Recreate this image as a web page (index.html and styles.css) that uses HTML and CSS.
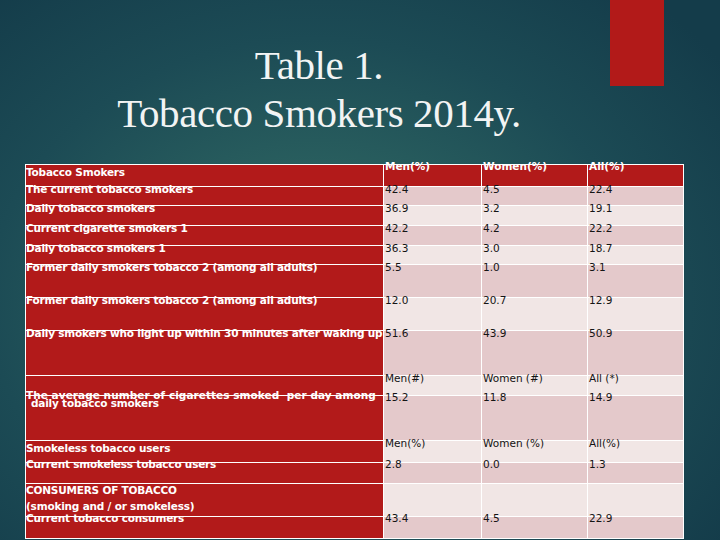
FILE: index.html
```html
<!DOCTYPE html>
<html>
<head>
<meta charset="utf-8">
<link rel="stylesheet" href="styles.css">
</head>
<body>
<div class="slide">
  <div class="accent"></div>
  <h1 class="title">Table 1.<br>Tobacco Smokers 2014y.</h1>
  <div class="grid">
    <div class="c lab t14 thick">Tobacco Smokers</div>
    <div class="c hv t2">Men(%)</div>
    <div class="c hv t2">Women(%)</div>
    <div class="c hv t2">All(%)</div>

    <div class="c lab">The current tobacco smokers</div>
    <div class="c v p">42.4</div><div class="c v p">4.5</div><div class="c v p">22.4</div>

    <div class="c lab">Daily tobacco smokers</div>
    <div class="c v l">36.9</div><div class="c v l">3.2</div><div class="c v l">19.1</div>

    <div class="c lab">Current cigarette smokers 1</div>
    <div class="c v p">42.2</div><div class="c v p">4.2</div><div class="c v p">22.2</div>

    <div class="c lab">Daily tobacco smokers 1</div>
    <div class="c v l">36.3</div><div class="c v l">3.0</div><div class="c v l">18.7</div>

    <div class="c lab">Former daily smokers tobacco 2 (among all adults)</div>
    <div class="c v p">5.5</div><div class="c v p">1.0</div><div class="c v p">3.1</div>

    <div class="c lab">Former daily smokers tobacco 2 (among all adults)</div>
    <div class="c v l">12.0</div><div class="c v l">20.7</div><div class="c v l">12.9</div>

    <div class="c lab">Daily smokers who light up within 30 minutes after waking up</div>
    <div class="c v p">51.6</div><div class="c v p">43.9</div><div class="c v p">50.9</div>

    <div class="c lab"></div>
    <div class="c v l">Men(#)</div><div class="c v l">Women (#)</div><div class="c v l">All (*)</div>

    <div class="c lab"><div class="avg"><div class="wide">The average number of cigarettes smoked&nbsp; per day among</div><div class="ind">daily tobacco smokers</div></div></div>
    <div class="c v p t2">15.2</div><div class="c v p t2">11.8</div><div class="c v p t2">14.9</div>

    <div class="c lab t14">Smokeless tobacco users</div>
    <div class="c v l">Men(%)</div><div class="c v l">Women (%)</div><div class="c v l">All(%)</div>

    <div class="c lab t2">Current smokeless tobacco users</div>
    <div class="c v p t2">2.8</div><div class="c v p t2">0.0</div><div class="c v p t2">1.3</div>

    <div class="c lab"><div class="t12">CONSUMERS OF TOBACCO</div><div class="t20">(smoking and / or smokeless)</div></div>
    <div class="c v l"></div><div class="c v l"></div><div class="c v l"></div>

    <div class="c lab t2">Current tobacco consumers</div>
    <div class="c v p t2">43.4</div><div class="c v p t2">4.5</div><div class="c v p t2">22.9</div>
  </div>
</div>
</body>
</html>
```

FILE: styles.css
```css
html, body {
  margin: 0;
  padding: 0;
}
body {
  width: 720px;
  height: 540px;
  overflow: hidden;
}
.slide {
  position: relative;
  width: 720px;
  height: 540px;
  padding-top: 41px;
  box-sizing: border-box;
  background:
    radial-gradient(ellipse 70% 75% at 44% 56%, #35706d 0%, #2a605f 30%, #1c4b55 65%, #143c4a 100%);
  overflow: hidden;
}
.accent {
  position: absolute;
  left: 610px;
  top: 0;
  width: 54px;
  height: 86px;
  background: #b21a19;
}
.title {
  margin: 0;
  width: 638px;
  text-align: center;
  font-family: "Liberation Serif", "Times New Roman", serif;
  font-weight: normal;
  font-size: 41px;
  line-height: 48px;
  letter-spacing: -0.4px;
  color: #f2f4f4;
}
.grid {
  margin: 27px 0 0 25px;
  display: grid;
  grid-template-columns: 357px 97px 105px 95px;
  grid-template-rows: 21px 18px 19px 19px 18px 32px 32px 44px 19px 44px 21px 20px 32px 21px;
  gap: 1px;
  padding: 1px;
  width: fit-content;
  background: #ffffff;
}
.c {
  white-space: nowrap;
  overflow: visible;
  line-height: 5px;
  font-family: "DejaVu Sans", sans-serif;
  min-width: 0;
}
.lab {
  background: #b21a1a;
  color: #ffffff;
  font-weight: bold;
  font-size: 10.5px;
  letter-spacing: -0.2px;
}
.hv {
  background: #b21a1a;
  color: #ffffff;
  font-weight: bold;
  font-size: 10.5px;
  padding-left: 1px;
}
.v {
  color: #141414;
  font-size: 10.5px;
  padding-left: 1px;
}
.p { background: #e4c9cb; }
.l { background: #f1e6e5; }
.thick { box-shadow: 0 2px 0 #ffffff; }
.t2 { line-height: 2px; }
.t14 { line-height: 14px; }
.avg {
  margin-top: -5px;
  line-height: 8px;
}
.wide { letter-spacing: 0.05px; }
.ind { padding-left: 5px; }
.t12 { line-height: 12px; }
.t20 { line-height: 20px; }
```
